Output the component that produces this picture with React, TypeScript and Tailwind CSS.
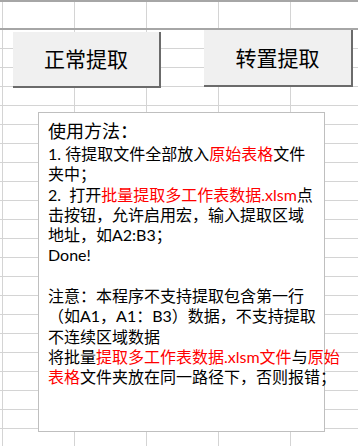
import React from 'react';

const FONT = "font-['Lato','Noto_Sans_CJK_SC',sans-serif]";

// column widths of the sheet, each cell carries its right grid line
const COLS = ['w-[3px]', 'w-[72px]', 'w-[72px]', 'w-[72px]', 'w-[72px]', 'w-[72px]'];

const SheetRow = ({ height }: { height: string }) => (
  <div className={`flex ${height}`}>
    {COLS.map((w, i) => (
      <div key={i} className={`${w} shrink-0 border-r border-[#d4d4d4]`} />
    ))}
  </div>
);

const Red = ({ children }: { children: React.ReactNode }) => (
  <span className="text-[#ff0000]">{children}</span>
);

const Line = ({ children }: { children?: React.ReactNode }) => (
  <div className="whitespace-pre leading-[20.3px] h-[20.3px]">{children}</div>
);

const SheetButton = ({ label, className }: { label: string; className: string }) => (
  <button
    className={`absolute flex items-center justify-center bg-[#f0f0f0] border-r-2 border-b-2 border-[#6b6b6b] text-[21px] text-black ${FONT} ${className}`}
  >
    {label}
  </button>
);

export default function App() {
  return (
    <div className="relative w-[358px] h-[446px] overflow-hidden bg-white">
      {/* spreadsheet grid */}
      <div className="h-[2px] bg-[#a6a6a6]" />
      <SheetRow height="h-[26px]" />
      <div className="h-[2px] bg-[#a6a6a6]" />
      {Array.from({ length: 22 }).map((_, i) => (
        <div key={i} className="border-b border-[#d4d4d4]">
          <SheetRow height="h-[18px]" />
        </div>
      ))}

      {/* form buttons */}
      <SheetButton label="正常提取" className="left-[13px] top-[32px] w-[148px] h-[56px]" />
      <SheetButton label="转置提取" className="left-[204px] top-[30px] w-[149px] h-[57px]" />

      {/* instructions text box */}
      <div
        className={`absolute left-[38px] top-[112px] w-[287px] h-[320px] bg-white border border-[#bfbfbf] pl-[9px] pt-[5px] text-[16px] text-black ${FONT}`}
      >
        <div className="text-[18px] leading-[26px]">使用方法：</div>
        <Line>
          1. 待提取文件全部放入<Red>原始表格</Red>文件
        </Line>
        <Line>夹中；</Line>
        <Line>
          {'2.  打开'}
          <Red>批量提取多工作表数据.xlsm</Red>点
        </Line>
        <Line>击按钮，允许启用宏，输入提取区域</Line>
        <Line>地址，如A2:B3；</Line>
        <Line>Done!</Line>
        <Line> </Line>
        <Line>注意：本程序不支持提取包含第一行</Line>
        <Line>（如A1，A1：B3）数据，不支持提取</Line>
        <Line>不连续区域数据</Line>
        <Line>
          将批量<Red>提取多工作表数据.xlsm文件</Red>与<Red>原始</Red>
        </Line>
        <Line>
          <Red>表格</Red>文件夹放在同一路径下，否则报错；
        </Line>
      </div>
    </div>
  );
}
